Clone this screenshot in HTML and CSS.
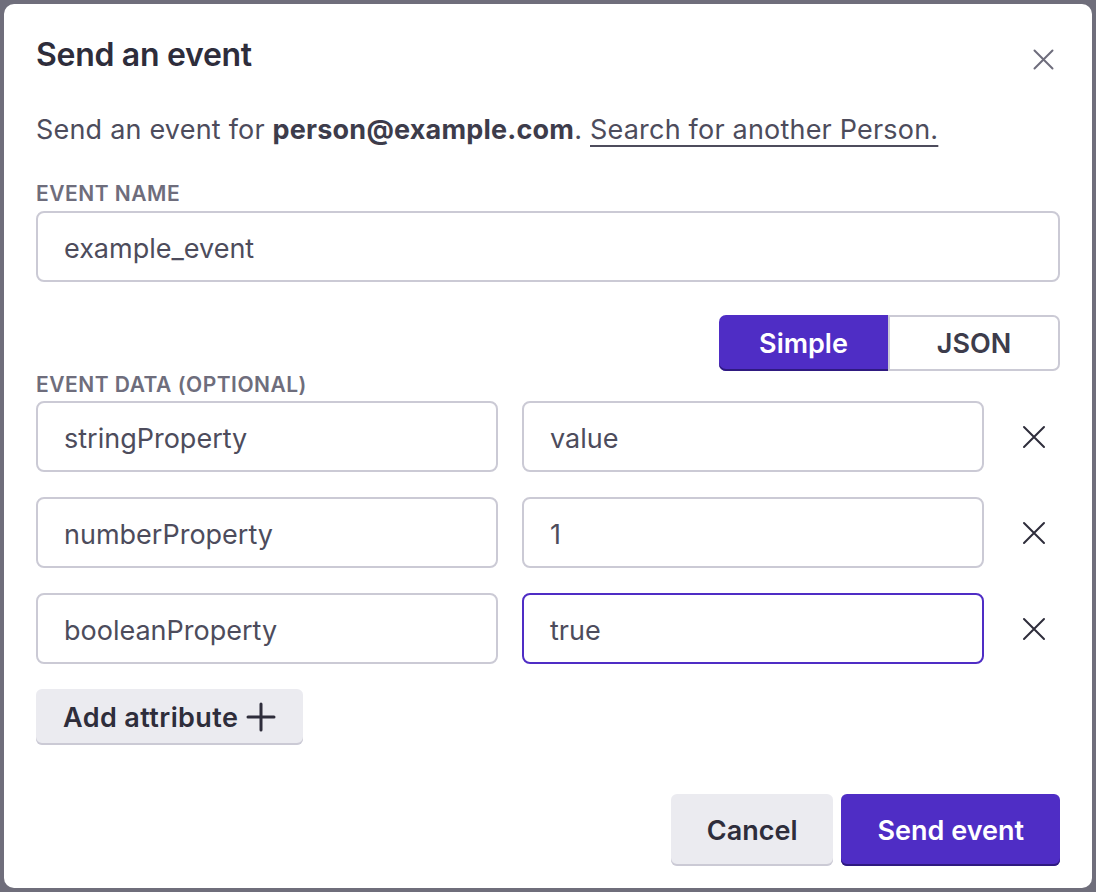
FILE: index.html
```html
<!DOCTYPE html>
<html>
<head>
<meta charset="utf-8">
<link rel="stylesheet" href="styles.css">
</head>
<body>
<div class="backdrop">
  <div class="modal">
    <div class="header">
      <h1 class="title">Send an event</h1>
      <button class="close" aria-label="Close">
        <svg width="21" height="21" viewBox="0 0 21 21"><path d="M1.5 1.5L19.5 19.5M19.5 1.5L1.5 19.5" stroke="#6e6d7c" stroke-width="2" stroke-linecap="round"/></svg>
      </button>
    </div>
    <p class="intro">Send an event for <strong>person@example.com</strong>. <a class="link" href="#">Search for another Person.</a></p>
    <div class="label">Event name</div>
    <div class="input">example_event</div>
    <div class="toggle-row">
      <div class="toggle">
        <span class="seg seg-on">Simple</span>
        <span class="seg seg-off">JSON</span>
      </div>
    </div>
    <div class="label label-data">Event data (optional)</div>
    <div class="rows">
      <div class="row">
        <div class="input">stringProperty</div>
        <div class="input">value</div>
        <button class="remove" aria-label="Remove"><svg width="24" height="24" viewBox="0 0 24 24"><path d="M2 2L22 22M22 2L2 22" stroke="#2e2d3b" stroke-width="2" stroke-linecap="round"/></svg></button>
      </div>
      <div class="row">
        <div class="input">numberProperty</div>
        <div class="input">1</div>
        <button class="remove" aria-label="Remove"><svg width="24" height="24" viewBox="0 0 24 24"><path d="M2 2L22 22M22 2L2 22" stroke="#2e2d3b" stroke-width="2" stroke-linecap="round"/></svg></button>
      </div>
      <div class="row">
        <div class="input">booleanProperty</div>
        <div class="input input-focus">true</div>
        <button class="remove" aria-label="Remove"><svg width="24" height="24" viewBox="0 0 24 24"><path d="M2 2L22 22M22 2L2 22" stroke="#2e2d3b" stroke-width="2" stroke-linecap="round"/></svg></button>
      </div>
    </div>
    <div class="add-row">
      <button class="btn btn-secondary btn-add">Add attribute <svg width="30" height="30" viewBox="0 0 30 30"><path d="M15 2V28M2 15H28" stroke="#2e2d3b" stroke-width="3" stroke-linecap="round"/></svg></button>
    </div>
    <div class="footer">
      <button class="btn btn-secondary btn-lg">Cancel</button>
      <button class="btn btn-primary btn-lg">Send event</button>
    </div>
  </div>
</div>
</body>
</html>
```
FILE: styles.css
```css
* { box-sizing: border-box; }
html, body { margin: 0; padding: 0; }
body {
  width: 1096px;
  height: 892px;
  background: #6f6e7b;
  font-family: Inter, "Noto Sans", sans-serif;
  color: #2e2d3b;
  overflow: hidden;
}
.backdrop {
  padding: 4px 4px 0 4px;
}
.modal {
  width: 1088px;
  height: 884px;
  background: #ffffff;
  border-radius: 10px;
  padding: 33px 32px 22px 32px;
  display: flex;
  flex-direction: column;
}
.header {
  display: flex;
  justify-content: space-between;
  align-items: center;
  height: 36px;
}
.title {
  margin: 0;
  font-size: 32px;
  line-height: 36px;
  font-weight: 600;
  letter-spacing: -0.3px;
  color: #2e2d3b;
}
.close {
  border: 0;
  background: none;
  padding: 0;
  width: 21px;
  height: 21px;
  margin-right: 6px;
  margin-top: 8px;
  display: flex;
}
.intro {
  margin: 39px 0 0 0;
  font-size: 27px;
  line-height: 36px;
  letter-spacing: 0.2px;
  color: #4d4c5c;
}
.intro strong {
  font-weight: 700;
  color: #3d3c4b;
}
.link {
  color: #4d4c5c;
  text-decoration: underline;
  text-underline-offset: 6px;
  text-decoration-thickness: 2px;
}
.label {
  margin-top: 32px;
  padding-top: 2px;
  font-size: 21px;
  line-height: 24px;
  font-weight: 600;
  text-transform: uppercase;
  letter-spacing: 0.5px;
  color: #6e6d7c;
}
.label + .input { margin-top: 5px; }
.input {
  height: 71px;
  border: 2px solid #cbcad5;
  border-radius: 8px;
  padding: 3px 26px 0 26px;
  display: flex;
  align-items: center;
  font-size: 27px;
  color: #4d4c5c;
  background: #fff;
}
.input-focus {
  border-color: #4f2dc5;
}
.toggle-row {
  margin-top: 33px;
  display: flex;
  justify-content: flex-end;
}
.toggle {
  display: flex;
  height: 56px;
}
.seg {
  display: flex;
  align-items: center;
  justify-content: center;
  font-size: 27px;
  font-weight: 600;
  padding-top: 1px;
}
.seg-on {
  background: #4f2dc5;
  color: #fff;
  border-radius: 7px 0 0 7px;
  box-shadow: inset 0 -2px 0 #2f1a80;
  width: 169px;
}
.seg-off {
  background: #fff;
  color: #3d3c4b;
  border: 2px solid #cbcad5;
  border-radius: 0 7px 7px 0;
  width: 172px;
}
.label-data { margin-top: 0; }
.rows {
  margin-top: 4px;
  display: flex;
  flex-direction: column;
  gap: 25px;
}
.row {
  display: grid;
  grid-template-columns: 462px 462px 52px;
  column-gap: 24px;
  align-items: center;
}
.remove {
  border: 0;
  background: none;
  padding: 0;
  width: 52px;
  height: 52px;
  display: flex;
  align-items: center;
  justify-content: center;
}
.add-row {
  margin-top: 25px;
  display: flex;
}
.btn {
  font-family: Inter, "Noto Sans", sans-serif;
  font-size: 27px;
  font-weight: 600;
  border: 0;
  border-radius: 6px;
  display: flex;
  align-items: center;
  justify-content: center;
  cursor: pointer;
}
.btn-secondary {
  background: #ebebf0;
  color: #2e2d3b;
  box-shadow: inset 0 -2px 0 #cbcad5;
}
.btn-primary {
  background: #4f2dc5;
  color: #fff;
  box-shadow: inset 0 -2px 0 #2f1a80;
}
.btn-add {
  height: 56px;
  width: 267px;
  padding: 0 0 0 27px;
  justify-content: flex-start;
  gap: 8px;
  letter-spacing: 0.4px;
}
.btn-add svg { width: 30px; height: 30px; }
.footer {
  margin-top: auto;
  display: flex;
  justify-content: flex-end;
  gap: 8px;
}
.btn-lg {
  height: 72px;
  padding: 0 36px;
}
```
